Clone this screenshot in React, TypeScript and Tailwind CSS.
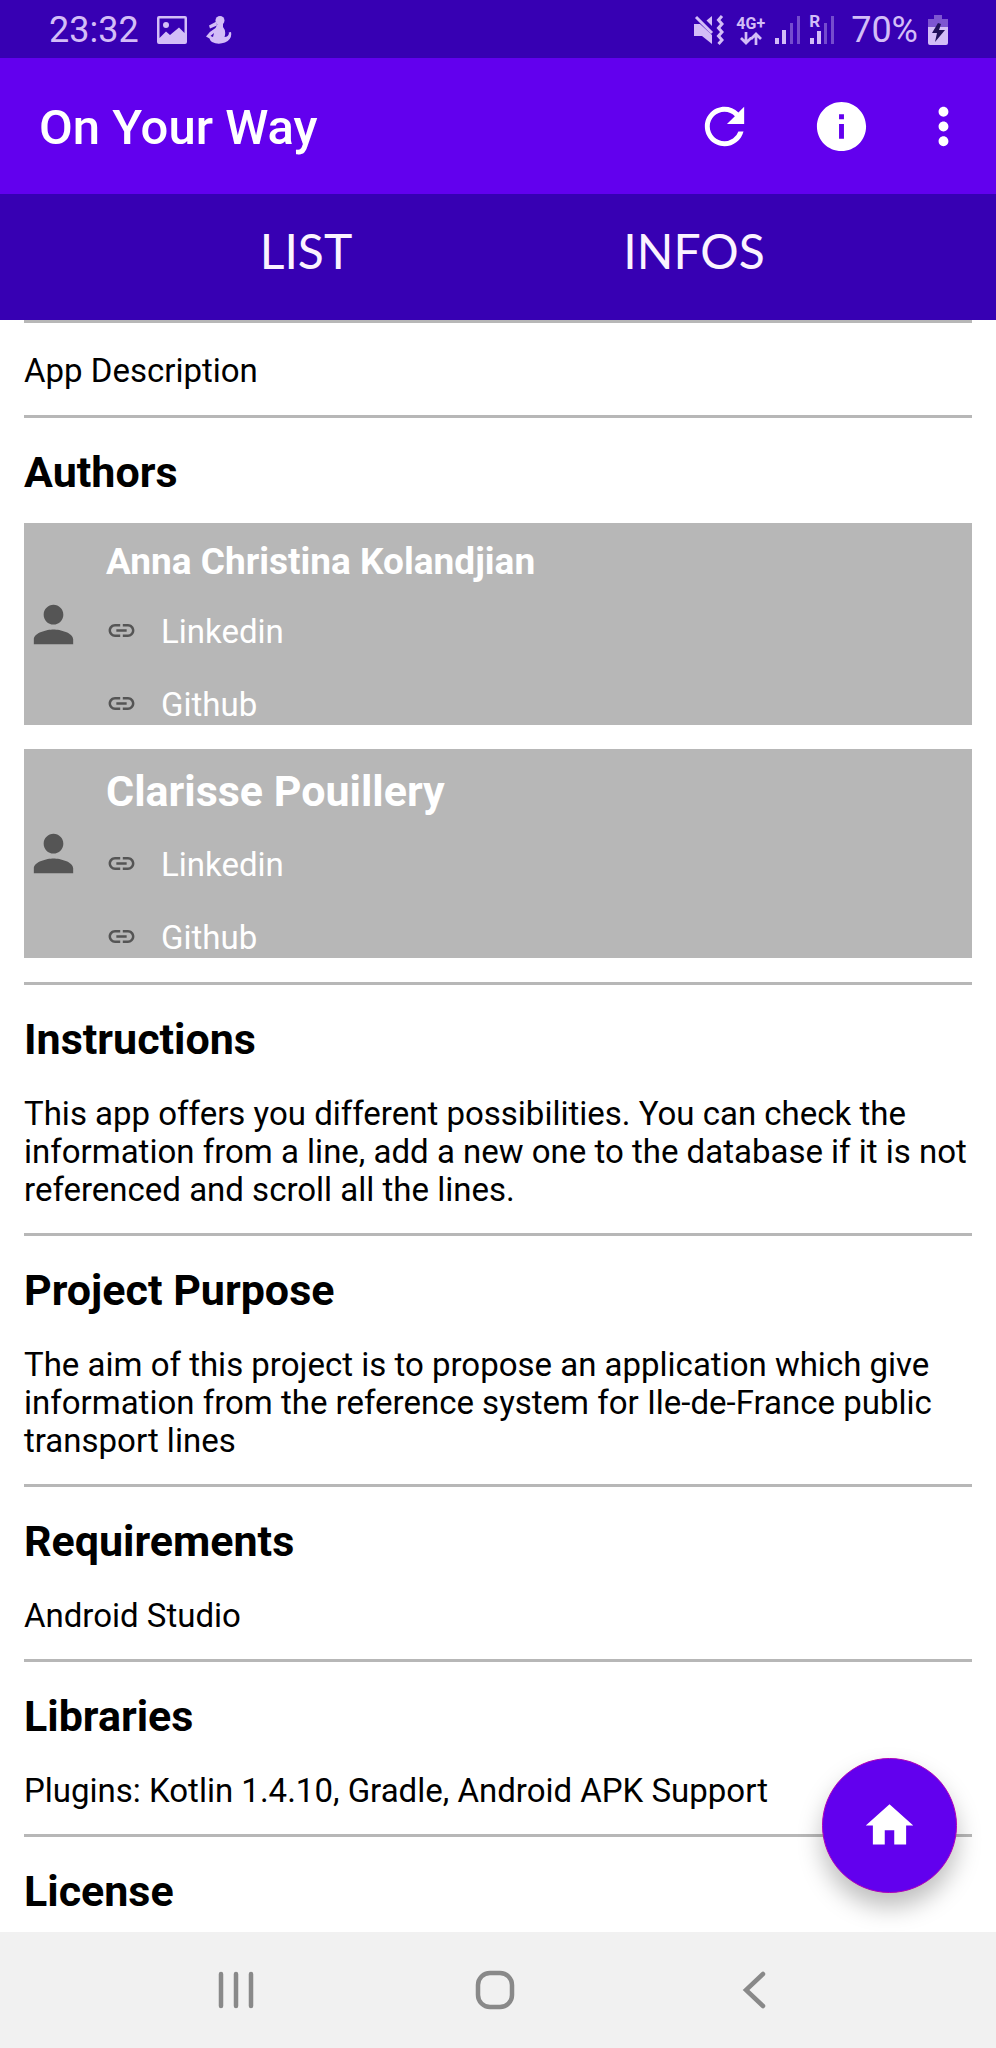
import type { ReactNode } from "react";
import { MdHome, MdInfo, MdLink, MdMoreVert, MdPerson, MdRefresh } from "react-icons/md";

function StatusBar() {
  return (
    <div className="flex h-[58px] shrink-0 items-center justify-between bg-[#3700b3] pt-[2px] pr-12 pl-[49px] text-[#d3bdf7]">
      <div className="flex items-center">
        <span className="text-[36px] leading-[42px]">23:32</span>
        <svg className="ml-[18px] h-[28px] w-[30px]" viewBox="0 0 30 28" fill="currentColor">
          <path
            fillRule="evenodd"
            d="M2 0H28Q30 0 30 2V26Q30 28 28 28H2Q0 28 0 26V2Q0 0 2 0ZM2.500 2.500V22L9 15.500L13 19L22 11.500L27.500 17V2.500Z"
          />
          <circle cx="9" cy="9" r="3" />
        </svg>
        <svg className="ml-[19px] h-[28px] w-[26px]" viewBox="0 0 26 28" fill="currentColor">
          <ellipse cx="14" cy="4.500" rx="4.500" ry="4.500" />
          <path d="M10.500 5.500L3 9.500L4 12.500L11 9.500Z" />
          <path
            fillRule="evenodd"
            d="M11.500 8H17V11Q20.500 15 18.500 21Q22.500 21 23 17L22.500 16.500L25 16Q26.500 23 19 26.500Q12 29 6 26Q4 24.500 3.500 22.500L0 20.500Q4 15 9.500 12ZM8 17L4.500 20L7 21Z"
          />
        </svg>
      </div>
      <div className="flex items-center">
        <svg className="h-[30px] w-[30px]" viewBox="0 0 30 30" fill="currentColor">
          <path d="M0 9H6L18 20V29L8 21H0Z" />
          <path d="M18 1V11L12.500 5.500Z" />
          <path d="M2 2L18 18" stroke="currentColor" strokeWidth="3" />
          <path d="M28 1L24.500 5L28 9L24.500 13L28 17L24.500 21L28 25L24.500 29" fill="none" stroke="currentColor" strokeWidth="3" />
        </svg>
        <div className="ml-3 flex flex-col items-center">
          <span className="text-[16px] leading-[16px] font-bold">4G+</span>
          <svg className="h-[13px] w-[22px]" viewBox="0 0 22 13" fill="none" stroke="currentColor" strokeWidth="2.700">
            <path d="M6 0V11M1 6L6 11L11 6M16 13V2M11 7L16 2L21 7" />
          </svg>
        </div>
        <svg className="ml-[10px] h-[28px] w-[26px]" viewBox="0 0 26 28" fill="currentColor">
          <rect x="0" y="22" width="4" height="6" />
          <rect x="7" y="14" width="4" height="14" />
          <rect x="15" y="7" width="3" height="21" opacity="0.400" />
          <rect x="22" y="0" width="3" height="28" opacity="0.400" />
        </svg>
        <div className="relative ml-2 h-[28px] w-[26px]">
          <span className="absolute -top-[3px] left-0 text-[17px] leading-[16px] font-bold">R</span>
          <svg className="h-[28px] w-[26px]" viewBox="0 0 26 28" fill="currentColor">
            <rect x="1" y="22" width="4" height="6" />
            <rect x="8" y="15" width="4" height="13" />
            <rect x="15" y="7" width="3" height="21" opacity="0.400" />
            <rect x="22" y="0" width="3" height="28" opacity="0.400" />
          </svg>
        </div>
        <span className="ml-4 text-[36px] leading-[42px]">70%</span>
        <svg className="ml-[10px] h-[30px] w-[20px]" viewBox="0 0 20 30" fill="currentColor">
          <path d="M6 0H14V4H20V12H0V4H6Z" opacity="0.450" />
          <path d="M0 12H20V28Q20 30 18 30H2Q0 30 0 28Z" />
          <path d="M10 8L4 18H9L7 27L17 15H11L13 9Z" fill="#21105a" />
        </svg>
      </div>
    </div>
  );
}

function AppBar() {
  return (
    <header className="flex h-[136px] shrink-0 items-center bg-[#6200ee] pr-[23px] pl-[39px] text-white">
      <h1 className="flex-1 pt-1 text-[49px] leading-[58px] font-medium">On Your Way</h1>
      <button type="button" aria-label="Refresh" className="mr-[58px]">
        <MdRefresh className="size-[59px]" />
      </button>
      <button type="button" aria-label="Information" className="mr-[43px]">
        <MdInfo className="size-[59px]" />
      </button>
      <button type="button" aria-label="More options">
        <MdMoreVert className="size-[59px]" />
      </button>
    </header>
  );
}

function Tabs() {
  return (
    <nav className="flex h-[126px] shrink-0 items-center bg-[#3700b3] pr-27 pb-3 pl-28 font-['Lato',sans-serif] text-[48px] leading-[60px] text-[#fbf3ff]">
      <a href="#list" className="flex-1 text-center">LIST</a>
      <a href="#infos" className="flex-1 text-center">INFOS</a>
    </nav>
  );
}

function Section({ title, children }: { title: string; children?: ReactNode }) {
  return (
    <section className="border-t-3 border-[#b7b7b7] pt-[29px]">
      <h2 className="text-[43px] leading-[50px] font-bold">{title}</h2>
      {children}
    </section>
  );
}

function Paragraph({ children }: { children: ReactNode }) {
  return <p className="pt-[31px] pb-6">{children}</p>;
}

function ProfileLink({ href, children }: { href: string; children: ReactNode }) {
  return (
    <a href={href} className="flex items-center gap-6">
      <MdLink className="mb-[3px] size-[31px] text-[#555555]" />
      {children}
    </a>
  );
}

function AuthorCard({ name, small }: { name: string; small?: boolean }) {
  return (
    <article className="flex items-center gap-[23px] bg-[#b7b7b7] text-white">
      <MdPerson className="size-[59px] shrink-0 text-[#555555]" />
      <div className="min-w-0 flex-1 pt-[17px] pb-px">
        <h3 className={small ? "text-[37px] leading-[43px] font-bold" : "text-[43px] leading-[50px] font-bold"}>{name}</h3>
        <div className="mt-[30px] flex flex-col gap-[35px]">
          <ProfileLink href="#linkedin">Linkedin</ProfileLink>
          <ProfileLink href="#github">Github</ProfileLink>
        </div>
      </div>
    </article>
  );
}

function SystemNav() {
  return (
    <div className="grid h-[116px] shrink-0 grid-cols-3 place-items-center bg-[#f1f1f1] pr-28 pl-[106px] text-[#898989]">
      <button type="button" aria-label="Recent apps">
        <svg className="size-10" viewBox="0 0 40 40" stroke="currentColor" strokeWidth="4.500" strokeLinecap="round">
          <path d="M5 4V36M20 4V36M35 4V36" />
        </svg>
      </button>
      <button type="button" aria-label="Home screen">
        <svg className="size-10" viewBox="0 0 40 40" fill="none" stroke="currentColor" strokeWidth="4.500">
          <rect x="3" y="3" width="34" height="34" rx="12" />
        </svg>
      </button>
      <button type="button" aria-label="Back">
        <svg className="size-10" viewBox="0 0 40 40" fill="none" stroke="currentColor" strokeWidth="4.500" strokeLinecap="round">
          <path d="M29 4L12 20L29 36" />
        </svg>
      </button>
    </div>
  );
}

export default function App() {
  return (
    <div className="flex h-screen flex-col bg-white font-['Roboto',sans-serif] text-[33px] leading-[38px] text-black">
      <StatusBar />
      <AppBar />
      <Tabs />
      <div className="relative min-h-0 flex-1">
        <main className="h-full overflow-x-hidden overflow-y-auto px-6">
          <p className="border-t-3 border-[#b7b7b7] pt-[29px] pb-[25px]">App Description</p>
          <Section title="Authors">
            <div className="flex flex-col gap-6 pt-[26px] pb-6">
              <AuthorCard name="Anna Christina Kolandjian" small />
              <AuthorCard name="Clarisse Pouillery" />
            </div>
          </Section>
          <Section title="Instructions">
            <Paragraph>
              This app offers you different possibilities. You can check the information from a line, add a new one to the
              database if it is not referenced and scroll all the lines.
            </Paragraph>
          </Section>
          <Section title="Project Purpose">
            <Paragraph>
              The aim of this project is to propose an application which give information from the reference system for
              Ile-de-France public transport lines
            </Paragraph>
          </Section>
          <Section title="Requirements">
            <Paragraph>Android Studio</Paragraph>
          </Section>
          <Section title="Libraries">
            <Paragraph>Plugins: Kotlin 1.4.10, Gradle, Android APK Support</Paragraph>
          </Section>
          <Section title="License" />
        </main>
        <button
          type="button"
          aria-label="Home"
          className="absolute right-[39px] bottom-[39px] flex size-[135px] items-center justify-center rounded-full border border-[#b000b8] bg-[#6200ee] text-white shadow-[0_14px_24px_rgba(0,0,0,0.26)]"
        >
          <MdHome className="size-[57px]" />
        </button>
      </div>
      <SystemNav />
    </div>
  );
}
